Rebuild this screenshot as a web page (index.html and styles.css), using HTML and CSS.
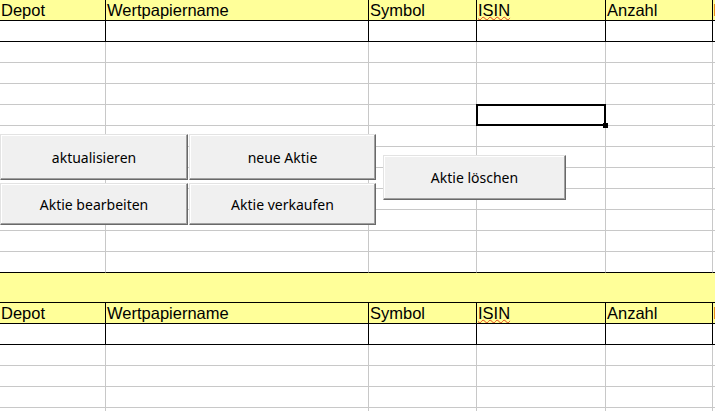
FILE: index.html
```html
<!DOCTYPE html>
<html>
	<head>
		<title>Depot</title>
		<link rel="stylesheet" href="styles.css">
	</head>
	<body>
		<div class="sheet">
			<div class="row hdr">
				<div class="cell a">Depot</div>
				<div class="cell b">Wertpapiername</div>
				<div class="cell c">Symbol</div>
				<div class="cell d"><span class="typo">ISIN</span></div>
				<div class="cell e">Anzahl</div>
				<div class="cell f"><span class="more">Kurs</span></div>
			</div>
			<div class="row blk">
				<div class="cell a"></div><div class="cell b"></div><div class="cell c"></div><div class="cell d"></div><div class="cell e"></div><div class="cell f"></div>
			</div>
			<div class="row"><div class="cell a"></div><div class="cell b"></div><div class="cell c"></div><div class="cell d"></div><div class="cell e"></div><div class="cell f"></div></div>
			<div class="row"><div class="cell a"></div><div class="cell b"></div><div class="cell c"></div><div class="cell d"></div><div class="cell e"></div><div class="cell f"></div></div>
			<div class="row"><div class="cell a"></div><div class="cell b"></div><div class="cell c"></div><div class="cell d"></div><div class="cell e"></div><div class="cell f"></div></div>
			<div class="row"><div class="cell a"></div><div class="cell b"></div><div class="cell c"></div><div class="cell d"></div><div class="cell e"></div><div class="cell f"></div></div>
			<div class="row"><div class="cell a"></div><div class="cell b"></div><div class="cell c"></div><div class="cell d"></div><div class="cell e"></div><div class="cell f"></div></div>
			<div class="row"><div class="cell a"></div><div class="cell b"></div><div class="cell c"></div><div class="cell d"></div><div class="cell e"></div><div class="cell f"></div></div>
			<div class="row"><div class="cell a"></div><div class="cell b"></div><div class="cell c"></div><div class="cell d"></div><div class="cell e"></div><div class="cell f"></div></div>
			<div class="row"><div class="cell a"></div><div class="cell b"></div><div class="cell c"></div><div class="cell d"></div><div class="cell e"></div><div class="cell f"></div></div>
			<div class="row"><div class="cell a"></div><div class="cell b"></div><div class="cell c"></div><div class="cell d"></div><div class="cell e"></div><div class="cell f"></div></div>
			<div class="row"><div class="cell a"></div><div class="cell b"></div><div class="cell c"></div><div class="cell d"></div><div class="cell e"></div><div class="cell f"></div></div>
			<div class="row bb"><div class="cell a"></div><div class="cell b"></div><div class="cell c"></div><div class="cell d"></div><div class="cell e"></div><div class="cell f"></div></div>

			<div class="row band"><div class="cell full"></div></div>

			<div class="row hdr">
				<div class="cell a">Depot</div>
				<div class="cell b">Wertpapiername</div>
				<div class="cell c">Symbol</div>
				<div class="cell d"><span class="typo">ISIN</span></div>
				<div class="cell e">Anzahl</div>
				<div class="cell f"><span class="more">Kurs</span></div>
			</div>
			<div class="row blk">
				<div class="cell a"></div><div class="cell b"></div><div class="cell c"></div><div class="cell d"></div><div class="cell e"></div><div class="cell f"></div>
			</div>
			<div class="row"><div class="cell a"></div><div class="cell b"></div><div class="cell c"></div><div class="cell d"></div><div class="cell e"></div><div class="cell f"></div></div>
			<div class="row"><div class="cell a"></div><div class="cell b"></div><div class="cell c"></div><div class="cell d"></div><div class="cell e"></div><div class="cell f"></div></div>
			<div class="row"><div class="cell a"></div><div class="cell b"></div><div class="cell c"></div><div class="cell d"></div><div class="cell e"></div><div class="cell f"></div></div>
			<div class="row"><div class="cell a"></div><div class="cell b"></div><div class="cell c"></div><div class="cell d"></div><div class="cell e"></div><div class="cell f"></div></div>

			<div class="selection"><span class="handle"></span></div>

			<div class="buttons">
				<button class="btn">aktualisieren</button>
				<button class="btn">neue Aktie</button>
				<button class="btn">Aktie bearbeiten</button>
				<button class="btn">Aktie verkaufen</button>
			</div>
			<button class="btn delete">Aktie löschen</button>
		</div>
	</body>
</html>
```

FILE: styles.css
```css
body {
	margin: 0;
	background-color: white;
}

.sheet {
	position: relative;
	width: 715px;
	height: 411px;
	overflow: hidden;
	font-family: "Liberation Sans", Arial, sans-serif;
	font-size: 16.5px;
	color: black;
}

.row {
	display: flex;
	height: 21px;
}

.cell {
	flex: none;
	box-sizing: border-box;
	height: 21px;
	border-right: 1px solid #c8c8c8;
	border-bottom: 1px solid #c8c8c8;
	padding-left: 1px;
	line-height: 20px;
	white-space: nowrap;
	overflow: hidden;
}

.a { width: 106px; }
.b { width: 263px; }
.c { width: 108px; }
.d { width: 129px; }
.e { width: 107px; }
.f { width: 120px; }

.hdr .cell {
	background-color: #ffff99;
	border-color: black;
}

.blk .cell {
	border-color: black;
}

.bb .cell {
	border-bottom-color: black;
}

.band {
	height: 30px;
}

.band .full {
	width: 715px;
	height: 30px;
	border-right: none;
	border-bottom: 1px solid black;
	background-color: #ffff99;
}

.typo {
	text-decoration: underline wavy #e2421c;
	text-decoration-thickness: 1px;
	text-underline-offset: 0;
}

.more {
	color: #c65911;
	margin-left: -1px;
}

/* selected cell */
.selection {
	position: absolute;
	left: 476px;
	top: 104px;
	width: 130px;
	height: 22px;
	box-sizing: border-box;
	border: 2px solid black;
}

.handle {
	position: absolute;
	right: -4px;
	bottom: -4px;
	width: 5px;
	height: 5px;
	background-color: black;
}

/* form controls lying on the sheet */
.buttons {
	position: absolute;
	left: 0;
	top: 134px;
	display: grid;
	grid-template-columns: 188px 187px;
	grid-template-rows: 46px 42px;
	column-gap: 1px;
	row-gap: 3px;
}

.btn {
	box-sizing: border-box;
	margin: 0;
	padding: 0;
	background-color: #f0f0f0;
	border: 1px solid;
	border-color: #e3e3e3 #696969 #696969 #e3e3e3;
	box-shadow: inset -1px -1px #a0a0a0, inset 1px 1px #ffffff;
	font-family: "Noto Sans", sans-serif;
	font-size: 14px;
	color: black;
}

.delete {
	position: absolute;
	left: 383px;
	top: 155px;
	width: 183px;
	height: 45px;
}
```
